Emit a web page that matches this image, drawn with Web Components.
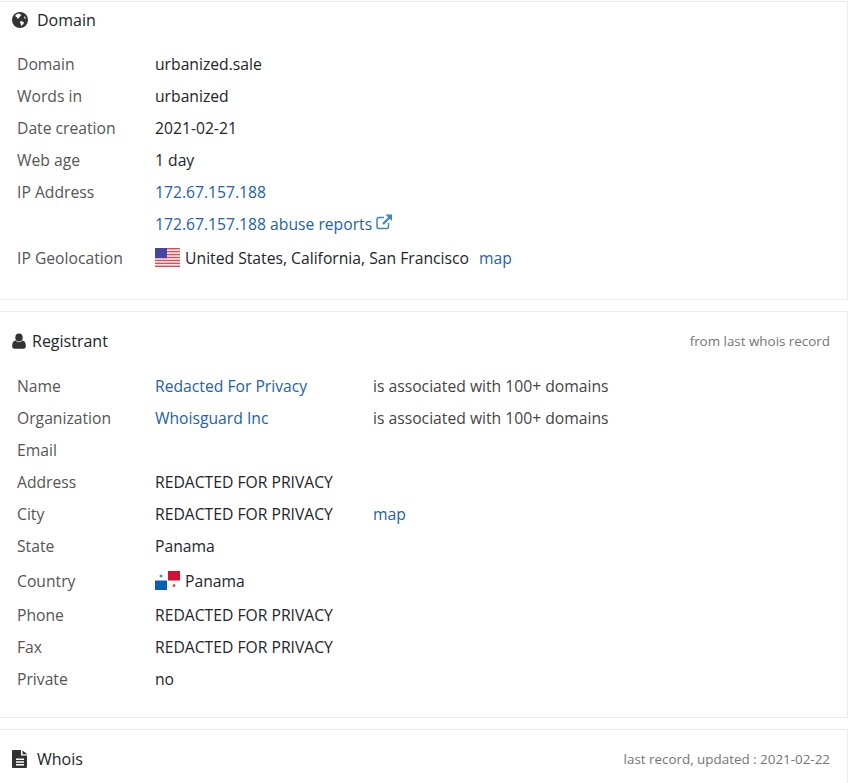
<!DOCTYPE html>
<html lang="en">
<head>
<meta charset="utf-8">
<title>urbanized.sale</title>
<style>
    html, body { margin: 0; padding: 0; height: 783px; overflow: hidden; background: #fff; }
    body { font-family: "Open Sans", "Liberation Sans", sans-serif; font-size: 15.7px; color: #212529; }
    a { color: #2162a8; text-decoration: none; }
    .stack { display: flex; flex-direction: column; gap: 11px; padding-top: 1px; }
</style>
</head>
<body>
<div class="stack">
    <info-card title="Domain" icon="globe" compact>
        <info-row label="Domain">urbanized.sale</info-row>
        <info-row label="Words in">urbanized</info-row>
        <info-row label="Date creation">2021-02-21</info-row>
        <info-row label="Web age">1 day</info-row>
        <info-row label="IP Address"><a href="#">172.67.157.188</a></info-row>
        <info-row><a href="#">172.67.157.188 abuse reports <site-icon name="external"></site-icon></a></info-row>
        <info-row label="IP Geolocation" tall="geo">
            <country-flag code="us"></country-flag> United States, California, San Francisco <a href="#" style="margin-left:6px">map</a>
        </info-row>
    </info-card>

    <info-card title="Registrant" icon="user" note="from last whois record">
        <info-row label="Name"><a href="#">Redacted For Privacy</a><span slot="extra">is associated with 100+ domains</span></info-row>
        <info-row label="Organization"><a href="#">Whoisguard Inc</a><span slot="extra">is associated with 100+ domains</span></info-row>
        <info-row label="Email"></info-row>
        <info-row label="Address">REDACTED FOR PRIVACY</info-row>
        <info-row label="City">REDACTED FOR PRIVACY<a href="#" slot="extra">map</a></info-row>
        <info-row label="State">Panama</info-row>
        <info-row label="Country" tall="flag"><country-flag code="pa"></country-flag> Panama</info-row>
        <info-row label="Phone">REDACTED FOR PRIVACY</info-row>
        <info-row label="Fax">REDACTED FOR PRIVACY</info-row>
        <info-row label="Private">no</info-row>
    </info-card>

    <info-card title="Whois" icon="file" note="last record, updated : 2021-02-22" wide-icon></info-card>
</div>

<script>
const ICONS = {
    globe: `<svg viewBox="0 0 16 16" width="16" height="16"><circle cx="8" cy="8" r="8" fill="#333"/>
        <path fill="#fff" d="M6.200 1.600 4.400 2.400 3.200 3.800l.6 1 1.200.4.400 1.200 1.200.4.200-1.200 1.200-.6.200-1.200 1.200-.4-.4-1L7.600 2zM8.400 9l1.600.2 1.200.8.800.4-.6 1.600-1.400 1.600-.8.200-.4-1.600-.6-1.200.2-1.200zM12.600 4l.8 1.200.4 1.400-.8.200-.8-.8z"/></svg>`,
    user: `<svg viewBox="0 0 14 16" width="14" height="16"><ellipse cx="7" cy="4.400" rx="3.700" ry="4" fill="#333"/>
        <path fill="#333" d="M3.600 7.600C4.500 8.600 5.700 9.200 7 9.200s2.500-.6 3.400-1.600c2.200.2 3.400 2 3.500 5.500 0 1.700-1 2.600-2.400 2.600H2.500C1 15.700 0 14.800.1 13.100.2 9.600 1.400 7.800 3.600 7.600z"/></svg>`,
    file: `<svg viewBox="0 0 16 18" width="16" height="18"><path fill="#333" d="M1 0h8v5.500h6V17a1 1 0 0 1-1 1H1a1 1 0 0 1-1-1V1a1 1 0 0 1 1-1z"/>
        <path fill="#333" d="M10.500 .4 15.500 4.300h-5z"/>
        <path fill="#fff" d="M4 8.500h8V10H4zM4 11.200h8v1.500H4zM4 13.900h8v1.500H4z"/></svg>`,
    external: `<svg viewBox="0 0 16 16" width="16" height="16" style="vertical-align:-1px"><path fill="none" stroke="#3f86c6" stroke-width="1.500" d="M12.500 9v3.500a2 2 0 0 1-2 2H3a2 2 0 0 1-2-2V5.500a2 2 0 0 1 2-2h5"/>
        <path fill="#3f86c6" d="M9.500 .5H16V7l-2.200-2.200-6 6-1.600-1.600 6-6z"/></svg>`
};

const stripes = () => {
    let out = '';
    for (let i = 0; i < 13; i += 2) {
        out += `<rect y="${(i * 19 / 13).toFixed(2)}" width="25" height="1.460" fill="#e8474f"/>`;
    }
    return out;
};

const FLAGS = {
    us: `<svg viewBox="0 0 25 19" width="25" height="19">${stripes()}<rect width="12" height="10.200" fill="#44479f"/></svg>`,
    pa: `<svg viewBox="0 0 25 19" width="25" height="19"><rect x="13" width="12" height="9.500" fill="#d21034"/><rect y="9.500" width="12" height="9.500" fill="#0a5fb4"/>
        <circle cx="6" cy="5" r="1.500" fill="#4a86c8"/><circle cx="19" cy="14.500" r="1.500" fill="#e04a66"/></svg>`
};

class SiteIcon extends HTMLElement {
    connectedCallback() {
        const root = this.shadowRoot || this.attachShadow({ mode: 'open' });
        root.innerHTML = `<style>:host { display: inline-block; line-height: 0; } svg { display: block; }</style>${ICONS[this.getAttribute('name')]}`;
    }
}
customElements.define('site-icon', SiteIcon);

class CountryFlag extends HTMLElement {
    connectedCallback() {
        const root = this.shadowRoot || this.attachShadow({ mode: 'open' });
        root.innerHTML = `<style>:host { display: inline-block; width: 25px; height: 19px; margin-right: 1px; vertical-align: -3px; } svg { display: block; }</style>${FLAGS[this.getAttribute('code')]}`;
    }
}
customElements.define('country-flag', CountryFlag);

class InfoCard extends HTMLElement {
    connectedCallback() {
        const root = this.shadowRoot || this.attachShadow({ mode: 'open' });
        const note = this.getAttribute('note') || '';
        root.innerHTML = `
            <style>
                :host {
                    display: block;
                    box-sizing: border-box;
                    width: 848px;
                    border: 1px solid #ececec;
                    border-left: none;
                    background: #fff;
                }
                :host([compact]) .head { height: 36px; }
                :host([compact]) .title { gap: 9px; }
                :host([compact]) .body { padding-top: 10px; padding-bottom: 24px; }
                :host([wide-icon]) .title { gap: 9px; }
                .head {
                    display: flex;
                    justify-content: space-between;
                    align-items: center;
                    height: 58px;
                    box-sizing: border-box;
                    padding: 0 17px 0 12px;
                }
                .title {
                    display: flex;
                    align-items: center;
                    gap: 6px;
                    font-weight: 500;
                    font-size: 16px;
                    color: #212529;
                }
                .note { font-size: 13.4px; color: #757575; }
                .body { padding: 0 0 22px; }
            </style>
            <div class="head">
                <div class="title"><site-icon name="${this.getAttribute('icon')}"></site-icon><span>${this.getAttribute('title')}</span></div>
                <div class="note">${note}</div>
            </div>
            <div class="body"><slot></slot></div>`;
    }
}
customElements.define('info-card', InfoCard);

class InfoRow extends HTMLElement {
    connectedCallback() {
        const root = this.shadowRoot || this.attachShadow({ mode: 'open' });
        root.innerHTML = `
            <style>
                :host {
                    display: grid;
                    grid-template-columns: 138px 218px 1fr;
                    align-items: center;
                    height: 32px;
                    padding-left: 17px;
                    color: #212529;
                    white-space: nowrap;
                }
                :host([tall="geo"]) { height: 35px; }
                :host([tall="flag"]) { height: 37px; }
                .label { color: #555; }
                .extra { color: #444; }
            </style>
            <div class="label">${this.getAttribute('label') || ''}</div>
            <div><slot></slot></div>
            <div class="extra"><slot name="extra"></slot></div>`;
    }
}
customElements.define('info-row', InfoRow);
</script>
</body>
</html>
